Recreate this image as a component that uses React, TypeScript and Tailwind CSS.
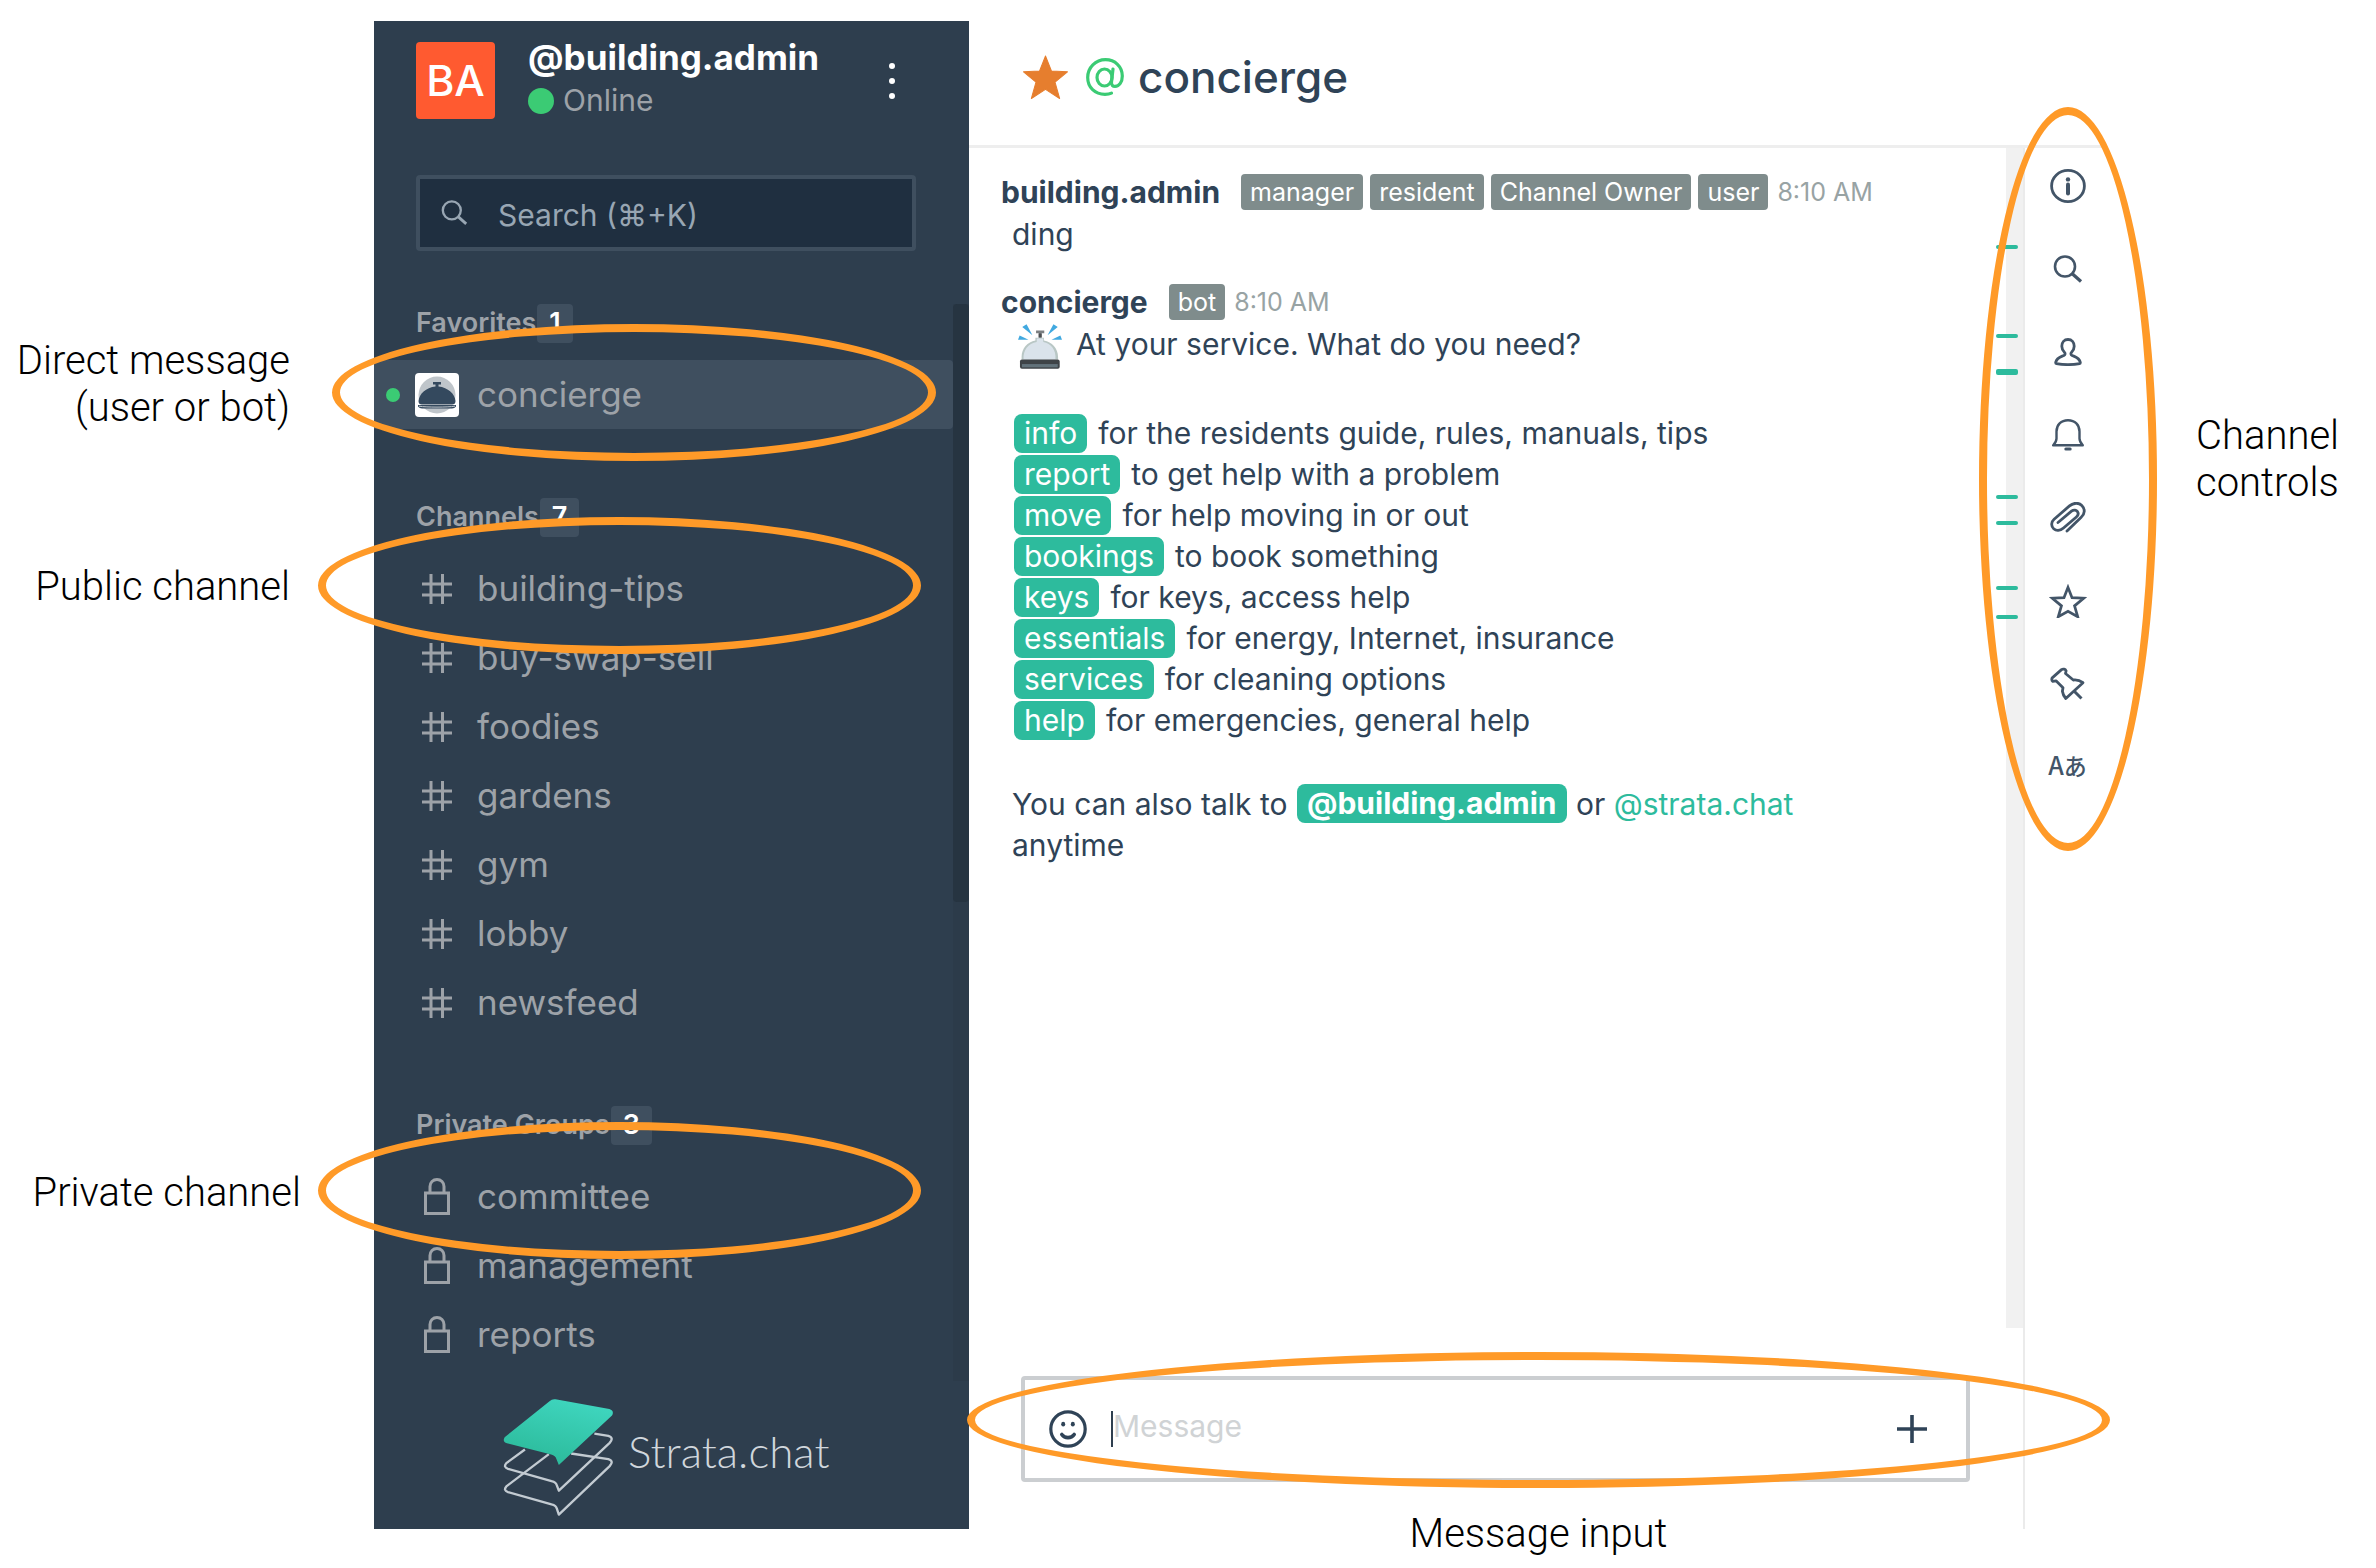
import React from 'react';

interface IconProps {
  className?: string;
}

const SearchIcon: React.FC<IconProps> = ({ className }) => (
  <svg viewBox="0 0 30 28" fill="none" stroke="currentColor" className={className} aria-hidden="true">
    <circle cx="12" cy="11.5" r="10" strokeWidth="2.6" />
    <path d="M19 18.5l9 8" strokeWidth="3.2" />
  </svg>
);

const InfoIcon = () => (
  <svg viewBox="0 0 36 34" fill="none" stroke="currentColor" className="w-9">
    <ellipse cx="18" cy="17" rx="16.4" ry="15.6" strokeWidth="2.8" />
    <circle cx="18" cy="10.4" r="2.2" fill="currentColor" stroke="none" />
    <path d="M18 15.6v8.8" strokeWidth="4" strokeLinecap="round" />
  </svg>
);

const UserIcon = () => (
  <svg viewBox="0 0 28 28" fill="none" stroke="currentColor" strokeWidth="2.8" strokeLinejoin="round" className="w-7">
    <path d="M14 1.500c-3.800 0-6.200 2.900-6.200 6.700 0 2.600 1.200 4.600 2.700 6.200.9 1 .8 2.500-.6 3.100C6.500 19 2.700 19.700 1.700 24.400c0 0-.1 1 .7 1.200 6.800 1.200 16.400 1.200 23.200 0 .8-.2.7-1.200.7-1.200-1-4.700-4.800-5.400-8.200-6.900-1.400-.6-1.500-2.100-.6-3.100 1.500-1.600 2.700-3.600 2.700-6.200 0-3.800-2.400-6.700-6.200-6.700z" />
  </svg>
);

const BellIcon = () => (
  <svg viewBox="0 0 32 32" fill="none" stroke="currentColor" strokeWidth="2.400" strokeLinejoin="round" className="w-8">
    <path d="M16 1.200C9 1.200 4.500 6 4.500 12.500v7c0 2.600-1.200 4.500-3.300 6.800h29.600c-2.100-2.300-3.300-4.200-3.300-6.800v-7C27.500 6 23 1.200 16 1.200z" />
    <path d="M13.800 30h4.400" strokeWidth="3" strokeLinecap="round" />
  </svg>
);

const ClipIcon = () => (
  <svg viewBox="0 0 36 32" fill="none" stroke="currentColor" strokeWidth="2.800" strokeLinecap="round" className="w-9">
    <path d="M8 20.500L21.500 9.200c2-1.600 4.600-1.400 5.800.2 1.300 1.700.9 4-.9 5.600L13.500 26c-3.400 2.900-7.300 3-9.800.8-2.800-2.600-2.700-6.900.4-9.600L19.500 3.900C23.600.5 28.700.4 31.800 3.400c3.500 3.400 3.200 8.600-.6 11.800L17 29" />
  </svg>
);

const StarOutlineIcon = () => (
  <svg viewBox="0 0 36 33" fill="none" stroke="currentColor" strokeWidth="2.600" strokeLinejoin="miter" className="w-[38px]">
    <path d="M18 3.200l3.800 9.800 11 .5-8.600 7.200 3 10.300-9.200-5.200-9.200 5.200 3-10.300-8.600-7.200 11-.5z" />
  </svg>
);

const PinIcon = () => (
  <svg viewBox="0 0 36 34" fill="none" stroke="currentColor" strokeWidth="2.800" strokeLinejoin="round" className="w-9">
    <path d="M11.500 2.600l-9 8c-1 1-1 3 .2 3.800l3.300-.6 7 7-.6 3.400c.4 3 1.600 5.200 3.400 7.300L33 15.700c-3-2.200-6-3.200-9.700-2.700L15.500 6.500l.6-2.700c-.8-1.700-3-2.200-4.600-1.200z" />
    <path d="M24.500 24.500l7 7" strokeWidth="3" />
  </svg>
);

const SmileyIcon = () => (
  <svg viewBox="0 0 38 38" fill="none" stroke="currentColor" className="w-[38px]">
    <circle cx="19" cy="19" r="17.200" strokeWidth="3.200" />
    <ellipse cx="14.200" cy="14.200" rx="2" ry="2.400" fill="currentColor" stroke="none" />
    <ellipse cx="23.800" cy="14.200" rx="2" ry="2.400" fill="currentColor" stroke="none" />
    <path d="M12.800 24.500c3 4.200 9.400 4.200 12.400 0" strokeWidth="3.600" strokeLinecap="round" />
  </svg>
);

const HashIcon = () => (
  <svg viewBox="0 0 30 30" fill="none" stroke="currentColor" strokeWidth="3" className="w-[30px]">
    <path d="M9 0v30M20.500 0v30M0 10h30M0 21h30" />
  </svg>
);

const LockIcon = () => (
  <svg viewBox="0 0 26 37" fill="none" stroke="currentColor" strokeWidth="3" className="w-[26px]">
    <path d="M1.500 15h23v20.500h-23zM6 15V8.500C6 4.500 9 1.500 13 1.500s7 3 7 7V15" />
  </svg>
);

const ConciergeAvatar = () => (
  <svg viewBox="0 0 44 44" className="w-11 rounded-[4px] bg-white">
    <circle cx="22" cy="22" r="18.500" fill="#bfc5ca" />
    <path d="M18 9h8v2.500h-2.500v2C33 14.500 40 21 40.500 28c0 2-.8 3.200-2 3.200h-33c-1.200 0-2-1.200-2-3.200C4 21 11 14.500 20.500 13.500v-2H18z" fill="#34495e" />
    <path d="M3 32h38v1.500c-1 1.200-2.500 2-4 2H7c-1.500 0-3-.8-4-2z" fill="#34495e" />
    <path d="M4 33.200c8 1.200 28 1.200 36 0" stroke="#bfc5ca" fill="none" />
  </svg>
);

const BellhopEmoji = () => (
  <svg viewBox="24 74 134 138" className="w-11 shrink-0">
    <path d="M37 83l13-8 18 33zM24 122l5-13 27 13zM145 83l-13-8-18 33zM158 122l-5-13-27 13z" fill="#41a9e0" />
    <path d="M79 94h25v8H96v18h-9v-18h-8z" fill="#7b7f82" />
    <path d="M87 103h9v12h-9z" fill="#4b4f52" />
    <path d="M35 182v-8c0-26 18-46 42-50v-8h26v8c24 4 43 24 43 50v8z" fill="#b9c7c5" />
    <path d="M41 182c-2-28 14-48 40-53v-11h20v11c24 5 40 25 37 53z" fill="#dae3eb" />
    <rect x="30" y="182" width="121" height="28" rx="6" fill="#3e4347" />
    <rect x="36" y="196" width="109" height="10" fill="#62727a" />
  </svg>
);

const LogoMark = () => (
  <svg viewBox="10 23 334 356" fill="none" className="w-[111px]">
    <defs>
      <linearGradient id="sheet" x1="0.7" y1="0" x2="0.3" y2="1">
        <stop offset="0" stopColor="#3fd6bf" />
        <stop offset="1" stopColor="#2bb999" />
      </linearGradient>
    </defs>
    <g stroke="#c3cbd2" strokeWidth="7" strokeLinejoin="round">
      <path d="M148 192L20 289q-10 12 5 17l131 37q14 3 16 13l6 18L331 228q14-15-4-21L215 190" />
      <path d="M76 178L20 219q-10 12 5 17l131 37q14 3 16 13l6 16L331 158q14-15-4-21L285 130" />
    </g>
    <path d="M150 33q8-8 18-6l162 29q16 5 8 20L178 225l-7-18q-3-10-16-14L22 159q-15-5-7-18z" fill="url(#sheet)" />
  </svg>
);

// Orange ring drawn over whatever it is placed in
const Ring: React.FC<IconProps> = ({ className }) => (
  <div className={`pointer-events-none absolute z-20 rounded-[50%] border-8 border-[#ff9a28] ${className}`} />
);

interface SectionProps {
  title: string;
  children: React.ReactNode;
}

const Section: React.FC<SectionProps> = ({ title, children }) => (
  <section className="mb-[69px] last:mb-3">
    <h3 className="mb-[17px] flex h-[39px] items-center pl-[42px] text-[27px] font-semibold">
      {title}
      <span className="ml-px flex h-full items-center rounded-[4px] bg-[#3f4f5f] px-3 text-white">
        {React.Children.count(children)}
      </span>
    </h3>
    <ul>{children}</ul>
  </section>
);

interface RoomProps {
  name: string;
  icon: React.ReactNode;
  active?: boolean;
  ring?: string;
}

const Room: React.FC<RoomProps> = ({ name, icon, active, ring }) => (
  <li className="relative">
    <a
      href={`#${name}`}
      className={`flex h-[69px] items-center rounded-r-[4px] pl-3 text-[35px] ${active ? 'bg-[#3f4f5f]' : ''}`}
    >
      <span className={`mr-[15px] size-[14px] rounded-full ${active ? 'bg-[#3bcb74]' : ''}`} />
      <span className="mr-[18px] flex w-11 justify-center">{icon}</span>
      {name}
    </a>
    {ring && <Ring className={ring} />}
  </li>
);

const channels = ['building-tips', 'buy-swap-sell', 'foodies', 'gardens', 'gym', 'lobby', 'newsfeed'];
const groups = ['committee', 'management', 'reports'];

const commands = [
  ['info', 'for the residents guide, rules, manuals, tips'],
  ['report', 'to get help with a problem'],
  ['move', 'for help moving in or out'],
  ['bookings', 'to book something'],
  ['keys', 'for keys, access help'],
  ['essentials', 'for energy, Internet, insurance'],
  ['services', 'for cleaning options'],
  ['help', 'for emergencies, general help'],
];

const controls = [
  { label: 'Info', icon: <InfoIcon /> },
  { label: 'Search messages', icon: <SearchIcon className="w-[30px]" /> },
  { label: 'Members', icon: <UserIcon /> },
  { label: 'Notifications', icon: <BellIcon /> },
  { label: 'Files', icon: <ClipIcon /> },
  { label: 'Starred', icon: <StarOutlineIcon /> },
  { label: 'Pinned', icon: <PinIcon /> },
];

interface MessageHeadProps {
  user: string;
  tags: string[];
  time: string;
}

const MessageHead: React.FC<MessageHeadProps> = ({ user, tags, time }) => (
  <div className="flex h-9 items-center gap-[7px] text-[25px]">
    <span className="mr-3.5 text-[30px] font-bold">{user}</span>
    {tags.map((tag) => (
      <span key={tag} className="flex h-full items-center rounded-[4px] bg-[#7f8c8c] px-[9px] text-white">
        {tag}
      </span>
    ))}
    <time className="ml-0.5 text-[#98a3a4]">{time}</time>
  </div>
);

const Sidebar = () => (
  <aside className="flex w-[595px] shrink-0 flex-col bg-[#2e3e4e] pt-[15px] text-[#9da2a8]">
    <div className="flex pr-[54px] pl-[42px]">
      <div className="mt-1.5 flex h-[77px] w-[79px] items-center justify-center rounded-[4px] bg-[#ff5a30] text-[43px] font-medium text-white">
        BA
      </div>
      <div className="ml-[33px] leading-[43px]">
        <div className="text-[35px] font-bold text-white">@building.admin</div>
        <div className="flex items-center gap-[9px] text-[30px]">
          <span className="size-[26px] rounded-full bg-[#3bcb74]" />
          Online
        </div>
      </div>
      <button aria-label="Menu" className="ml-auto flex w-[46px] flex-col items-center justify-center gap-[9px] pt-1">
        <span className="size-1.5 rounded-full bg-white" />
        <span className="size-1.5 rounded-full bg-white" />
        <span className="size-1.5 rounded-full bg-white" />
      </button>
    </div>

    <label className="mt-[53px] mr-[53px] ml-[42px] flex h-[76px] items-center rounded-[4px] border-4 border-[#3f4f5f] bg-[#1f2f40] pl-[21px] text-[#98a6b3]">
      <SearchIcon className="w-[27px] shrink-0" />
      <input
        aria-label="Search"
        placeholder="Search (⌘+K)"
        className="ml-[30px] w-full min-w-0 pt-1 text-[30px] outline-none placeholder:text-[#98a6b3]"
      />
    </label>

    <div className="mt-[53px] flex">
      <nav className="min-w-0 flex-1">
        <Section title="Favorites">
          <Room name="concierge" icon={<ConciergeAvatar />} active ring="-top-[36px] -left-[42px] h-[137px] w-[604px]" />
        </Section>
        <Section title="Channels">
          {channels.map((name, i) => (
            <Room
              key={name}
              name={name}
              icon={<HashIcon />}
              ring={i === 0 ? '-top-[37px] -left-[56px] h-[137px] w-[603px]' : undefined}
            />
          ))}
        </Section>
        <Section title="Private Groups">
          {groups.map((name, i) => (
            <Room
              key={name}
              name={name}
              icon={<LockIcon />}
              ring={i === 0 ? '-top-[40px] -left-[56px] h-[137px] w-[603px]' : undefined}
            />
          ))}
        </Section>
      </nav>
      <div className="w-4 bg-[#2c3b4a]">
        <div className="h-[598px] rounded-[4px] bg-[#263441]" />
      </div>
    </div>

    <div className="mt-[17px] flex items-center pb-3 pl-[129px] font-['Lato',sans-serif] text-[44px] font-light text-[#d0d6dc]">
      <LogoMark />
      <span className="ml-3.5 pb-3">Strata.chat</span>
    </div>
  </aside>
);

const Messages = () => (
  <div className="min-w-0 flex-1 pt-[26px] pl-8 text-[30px] leading-[41px]">
    <article>
      <MessageHead user="building.admin" tags={['manager', 'resident', 'Channel Owner', 'user']} time="8:10 AM" />
      <p className="mt-1 pl-[11px]">ding</p>
    </article>
    <article className="mt-[29px]">
      <MessageHead user="concierge" tags={['bot']} time="8:10 AM" />
      <div className="mt-1 pr-[150px] pl-[11px]">
        <p className="flex gap-3.5 pl-1.5">
          <BellhopEmoji />
          At your service. What do you need?
        </p>
        <ul className="mt-11">
          {commands.map(([command, text]) => (
            <li key={command} className="flex h-[41px] items-center gap-[11px] pl-0.5">
              <button className="h-[39px] rounded-[8px] bg-[#2dbb9d] px-2.5 leading-[39px] text-white">{command}</button>
              {text}
            </li>
          ))}
        </ul>
        <p className="mt-[43px]">
          You can also talk to{' '}
          <a href="#building.admin" className="mx-px inline-block h-[39px] rounded-[8px] bg-[#2dbb9d] px-2.5 align-top leading-[39px] font-bold text-white">
            @building.admin
          </a>{' '}
          or{' '}
          <a href="#strata.chat" className="text-[#2dbb9d]">
            @strata.chat
          </a>{' '}
          anytime
        </p>
      </div>
    </article>
  </div>
);

const mark = 'absolute -left-2.5 w-[22px] rounded-[2px] bg-[#2dbb9d]';

// Mentions and unread positions shown beside the scrollbar
const ScrollTrack = () => (
  <div className="relative w-[17px] shrink-0 bg-[#f1f1f1]">
    <span className={`${mark} top-[97px] h-1`} />
    <span className={`${mark} top-[186px] h-1`} />
    <span className={`${mark} top-[221px] h-1.5`} />
    <span className={`${mark} top-[347px] h-1`} />
    <span className={`${mark} top-[373px] h-1`} />
    <span className={`${mark} top-[438px] h-1`} />
    <span className={`${mark} top-[467px] h-1`} />
  </div>
);

const Composer = () => (
  <div className="relative mt-12 mr-[53px] mb-[47px] ml-[52px]">
    <div className="flex h-[106px] items-center rounded-[4px] border-4 border-[#cbced1] pr-[39px] pl-6">
      <button aria-label="Emoji">
        <SmileyIcon />
      </button>
      <span className="ml-6 h-9 w-0.5 bg-[#2f3f4f]" />
      <input
        aria-label="Message"
        placeholder="Message"
        className="h-12 min-w-0 flex-1 pb-1.5 text-[30px] outline-none placeholder:text-[#d0d3d5]"
      />
      <button aria-label="Add">
        <svg viewBox="0 0 30 28" stroke="currentColor" strokeWidth="3.600" className="w-[30px]">
          <path d="M0 14h30M15 0v28" />
        </svg>
      </button>
    </div>
    <Ring className="-top-6 -right-[140px] -bottom-1.5 -left-[54px]" />
    <p className="absolute top-[134px] -right-[142px] -left-14 text-center font-['Roboto',sans-serif] text-[40px] leading-[47px] font-light text-black">
      Message input
    </p>
  </div>
);

export default function App() {
  return (
    <div className="flex min-h-screen bg-white pt-[21px] pb-[39px] font-['Inter',sans-serif] text-[#2f4357]">
      <div className="w-[374px] shrink-0 pt-[316px] pr-[84px] text-right font-['Roboto',sans-serif] text-[40px] leading-[47px] font-light text-black">
        <p>
          Direct message
          <br />
          (user or bot)
        </p>
        <p className="mt-[132px]">Public channel</p>
        <p className="mt-[559px] -mr-[11px]">Private channel</p>
      </div>

      <Sidebar />

      <main className="flex min-w-0 flex-1 flex-col">
        <header className="flex h-[127px] items-center border-b-3 border-[#eeeeee] pb-3 pl-[54px]">
          <svg viewBox="0 0 44 43" fill="#e67e2e" stroke="#e67e2e" strokeLinejoin="round" className="w-[45px]">
            <path d="M22 1l5.800 14.600L43.500 16.400 31.300 26.600 35.800 42.500 22 33.600 8.200 42.500l4.500-15.900L.5 16.400l15.700-.8z" />
          </svg>
          <svg viewBox="0 0 38 38" fill="none" stroke="#3bcb74" strokeWidth="3.200" strokeLinecap="round" className="ml-[18px] w-[38px]">
            <ellipse cx="18.500" cy="19.500" rx="7.500" ry="8.500" />
            <path d="M27 11l-1.500 13c-.3 3 1.300 4.400 3.500 4.400 4.300 0 7.300-4.400 7.300-10.400C36.300 8.500 29 1.700 19.500 1.700 9.500 1.700 1.700 9.500 1.700 19.500c0 10 7.300 16.800 17.300 16.800 2.500 0 4.800-.4 6.500-1.200" />
          </svg>
          <h1 className="ml-3.5 text-[44px] font-medium">concierge</h1>
        </header>

        <div className="flex flex-1">
          <div className="flex min-w-0 flex-1 flex-col">
            <div className="flex flex-1">
              <Messages />
              <ScrollTrack />
            </div>
            <Composer />
          </div>

          <div className="relative flex w-[82px] shrink-0 flex-col items-center gap-[41px] border-l-2 border-[#ebebeb] pt-[17px] pl-[5px] text-[#435568]">
            {controls.map(({ label, icon }) => (
              <button key={label} aria-label={label} className="flex size-[42px] items-center justify-center">
                {icon}
              </button>
            ))}
            <button className="flex h-[42px] items-center pb-1 font-['Noto_Sans_CJK_JP',sans-serif] text-[25px] font-medium">
              A<span className="text-[23px]">あ</span>
            </button>
            <Ring className="-top-[41px] -left-[46px] h-[744px] w-[178px]" />
          </div>
        </div>
      </main>

      <div className="w-[271px] shrink-0 pt-[391px] pl-[91px] font-['Roboto',sans-serif] text-[40px] leading-[47px] font-light text-black">
        Channel
        <br />
        controls
      </div>
    </div>
  );
}
